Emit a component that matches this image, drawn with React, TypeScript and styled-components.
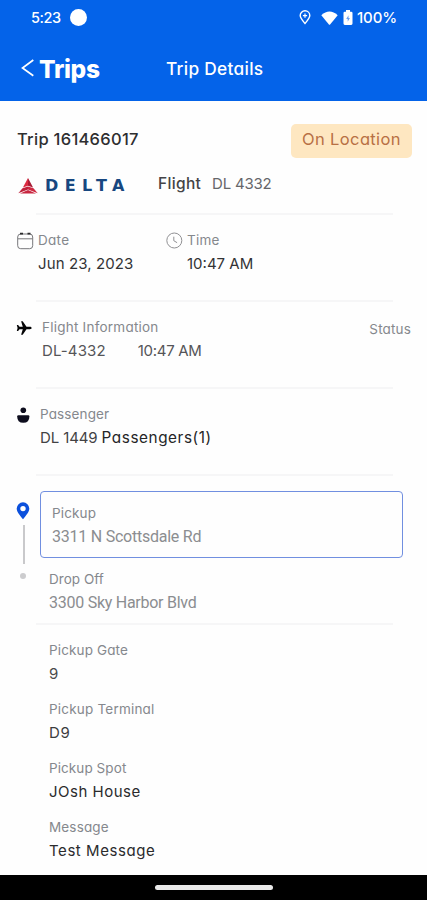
import React from 'react';
import styled, { createGlobalStyle } from 'styled-components';

const GlobalStyle = createGlobalStyle`
  * { box-sizing: border-box; }
  body { margin: 0; background: #fff; font-family: Inter, "Liberation Sans", sans-serif; font-feature-settings: "cv11"; }
`;

const Screen = styled.div`
  width: 427px;
  height: 900px;
  display: flex;
  flex-direction: column;
  background: #fefefe;
  overflow: hidden;
`;

const Header = styled.header`
  height: 101px;
  background: #0463e9;
  color: #fff;
`;

const StatusBar = styled.div`
  height: 35px;
  display: flex;
  align-items: center;
  padding: 0 30px 0 31px;
`;

const CameraDot = styled.span`
  width: 17px;
  height: 17px;
  margin-left: 9px;
  border-radius: 50%;
  background: #fff;
`;

const StatusIcons = styled.div`
  display: flex;
  align-items: center;
  margin-left: auto;
`;

const NavBar = styled.nav`
  height: 67px;
  display: grid;
  grid-template-columns: 145px 1fr;
  align-items: center;
  padding-left: 21px;
`;

const BackButton = styled.div`
  display: flex;
  align-items: center;
  gap: 4px;
`;

const Text = styled.span<{ $size?: number; $weight?: number; $color?: string; $spacing?: number }>`
  flex: none;
  font-size: ${p => p.$size ?? 15}px;
  font-weight: ${p => p.$weight ?? 400};
  color: ${p => p.$color ?? '#333335'};
  letter-spacing: ${p => p.$spacing ?? 0}px;
  line-height: 24px;
  white-space: pre;
`;

const Label = styled(Text).attrs({ $size: 13.5 })`
  color: #85888d;
`;

const Address = styled(Text).attrs({ $size: 16 })`
  font-family: Roboto, sans-serif;
  color: #8b8d90;
`;

const Content = styled.main`
  flex: 1;
  min-height: 0;
`;

const TitleRow = styled.div`
  display: flex;
  align-items: center;
  justify-content: space-between;
  height: 34px;
  margin: 23px 15px 0 17px;
`;

const TripNumber = styled(Text)`
  margin-bottom: 5px;
`;

const Badge = styled.div`
  width: 121px;
  height: 34px;
  padding: 3px 0 0 11px;
  border-radius: 5px;
  background: #fee7c1;
`;

const AirlineRow = styled.div`
  display: flex;
  align-items: center;
  height: 55px;
  padding: 0 0 3px 18px;
`;

const Airline = styled.div`
  display: flex;
  align-items: center;
  width: 140px;
  padding-top: 4px;
`;

const FlightLabel = styled(Text)`
  width: 54px;
`;

const Divider = styled.hr`
  height: 2px;
  margin: 0 34px 0 36px;
  border: 0;
  background: #f6f6f7;
`;

const Section = styled.section`
  display: flex;
  height: 85px;
  padding: 13px 16px 0 16px;
`;

const IconSlot = styled.div<{ $width: number; $top: number }>`
  flex: none;
  width: ${p => p.$width}px;
  padding-top: ${p => p.$top}px;
  svg { display: block; }
`;

const Field = styled.div<{ $width?: number }>`
  display: flex;
  flex-direction: column;
  width: ${p => (p.$width ? p.$width + 'px' : 'auto')};
`;

const ValueRow = styled.div<{ $gap?: number }>`
  display: flex;
  gap: ${p => p.$gap ?? 0}px;
`;

const StatusLabel = styled(Label)`
  margin: 2px 0 0 auto;
`;

const Route = styled.section`
  display: grid;
  grid-template-columns: 25px 1fr;
  height: 147px;
  padding: 15px 24px 0 15px;
`;

const Rail = styled.div`
  display: flex;
  flex-direction: column;
  align-items: center;
  width: 16px;
  padding-top: 11px;
  svg { display: block; }
`;

const RailLine = styled.span`
  width: 2px;
  height: 39px;
  margin: 5px 0 9px 2px;
  background: #c9c9cb;
`;

const RailDot = styled.span`
  width: 6px;
  height: 6px;
  border-radius: 50%;
  background: #ccccce;
`;

const PickupCard = styled.div`
  display: flex;
  flex-direction: column;
  width: 363px;
  height: 67px;
  padding: 9px 11px;
  border: 1px solid #718fe0;
  border-radius: 4px;
`;

const DropOff = styled.div`
  display: flex;
  flex-direction: column;
  padding: 9px 0 0 9px;
`;

const Details = styled.section`
  display: flex;
  flex-direction: column;
  gap: 11px;
  padding: 13px 0 0 49px;
`;

const SystemBar = styled.footer`
  display: flex;
  justify-content: center;
  height: 25px;
  padding-top: 10px;
  background: #000;
`;

const HomeHandle = styled.span`
  width: 118px;
  height: 5px;
  border-radius: 3px;
  background: #e9e9e9;
`;

const details: { label: string; ls: number; value: string; vs: number; color: string }[] = [
  { label: 'Pickup Gate', ls: 0.13, value: '9', vs: 0, color: '#4a4a4c' },
  { label: 'Pickup Terminal', ls: 0.2, value: 'D9', vs: 0.6, color: '#3c3c3e' },
  { label: 'Pickup Spot', ls: 0.08, value: 'JOsh House', vs: 0.5, color: '#2b2b2d' },
  { label: 'Message', ls: 0.15, value: 'Test Message', vs: 0.56, color: '#2b2b2d' },
];

const PinOutline = () => (
  <svg width="12" height="15" viewBox="0 0 12 15" fill="none" stroke="#fff" strokeWidth="1.4">
    <path d="M6 13.5C3 10 1.2 8 1.2 5.6a4.8 4.8 0 0 1 9.6 0C10.8 8 9 10 6 13.5Z" />
    <path d="M6 3.5v4.2M3.9 5.6h4.2" strokeWidth="1.2" />
  </svg>
);

const Wifi = () => (
  <svg width="17" height="14" viewBox="0 0 17 14" fill="#fff">
    <path d="M.3 4.3Q8.5-3.2 16.7 4.3L9.1 13.4q-.6.6-1.2 0Z" />
  </svg>
);

const Battery = () => (
  <svg width="10" height="15" viewBox="0 0 10 15">
    <path d="M3 0h4v1.7h1.2q1.3 0 1.3 1.3v10.6Q9.5 15 8.2 15H1.8Q.5 15 .5 13.6V3q0-1.3 1.3-1.3H3Z" fill="#fff" />
    <path d="M5.5 5.3 3.2 9h1.5v2.8L6.9 8H5.5Z" fill="#6a9ff1" />
  </svg>
);

const Chevron = () => (
  <svg width="14" height="20" viewBox="0 0 14 20" fill="none" stroke="#fff" strokeWidth="1.7">
    <path d="M12.3 1 1.5 9l10.800 7.800" />
  </svg>
);

const DeltaMark = () => (
  <svg width="20" height="16" viewBox="0 0 20 16">
    <path d="M10 0 4.9 9.6 10 7.8Z" fill="#dc2a40" />
    <path d="M10 0 15.1 9.6 10 7.8Z" fill="#a91c35" />
    <path d="M4.5 10.2.3 15.3 10 11.5V8.4Z" fill="#bd203a" />
    <path d="m15.5 10.2 4.2 5.1L10 11.5V8.4Z" fill="#cf2841" />
    <path d="M2 15.5 10 12.1l8 3.4Z" fill="#c82640" />
  </svg>
);

const DeltaWord = styled(Text)`
  margin-left: 7px;
  font-family: "DejaVu Sans", sans-serif;
`;

const CalendarIcon = () => (
  <svg width="18" height="18" viewBox="0 0 18 18" fill="none" stroke="#77777a" strokeWidth="1">
    <rect x="1.7" y="2" width="15" height="14.7" rx="3" />
    <path d="M2 6.8h14.5" />
    <path d="M4 1.7h3M11.5 1.7h3" stroke="#29292b" strokeWidth="1.7" />
  </svg>
);

const ClockIcon = () => (
  <svg width="17" height="17" viewBox="0 0 17 17" fill="none" stroke="#909093" strokeWidth="1">
    <circle cx="8.3" cy="8.5" r="7.5" />
    <path d="M7.8 4.7v4l3.3 2" />
  </svg>
);

const PlaneIcon = () => (
  <svg width="16" height="14" viewBox="0 0 16 14" fill="#050506">
    <path d="M15.6 7c0-.8-.8-1.2-1.7-1.2h-3.4L6.7.3H5.1l1.7 5.5H3.5L2.1 4H.8l.8 3-.8 3h1.3l1.4-1.8h3.3l-1.7 5.5h1.6l3.8-5.5h3.4c.9 0 1.7-.4 1.7-1.2Z" />
  </svg>
);

const PassengerIcon = () => (
  <svg width="14" height="17" viewBox="0 0 14 17" fill="#0d0d1d">
    <circle cx="7.3" cy="3.2" r="2.8" />
    <path d="M2.4 8.2h9.8q1.2 0 1.2 1.3 0 6.3-6.1 6.3T1.2 9.5q0-1.3 1.2-1.3Z" />
  </svg>
);

const PickupPin = () => (
  <svg width="14" height="18" viewBox="0 0 14 18">
    <path fillRule="evenodd" fill="#0b50dc" d="M7 17.3C3.5 13 .7 10 .7 6.6a6.3 6.3 0 0 1 12.6 0C13.3 10 10.5 13 7 17.3ZM7 3.9a2.7 2.7 0 1 0 0 5.4 2.7 2.7 0 0 0 0-5.4Z" />
  </svg>
);

const StatusIcon = styled.span<{ $after: number }>`
  display: flex;
  margin-right: ${p => p.$after}px;
`;

export default function App() {
  return (
    <>
      <GlobalStyle />
      <Screen>
        <Header>
          <StatusBar>
            <Text $size={14.5} $weight={500} $color="#fff" $spacing={-0.45}>5:23</Text>
            <CameraDot />
            <StatusIcons>
              <StatusIcon $after={10}><PinOutline /></StatusIcon>
              <StatusIcon $after={5}><Wifi /></StatusIcon>
              <StatusIcon $after={4}><Battery /></StatusIcon>
              <Text $weight={500} $color="#fff" $spacing={-0.12}>100%</Text>
            </StatusIcons>
          </StatusBar>
          <NavBar>
            <BackButton>
              <Chevron />
              <Text $size={24.5} $weight={800} $color="#fff" $spacing={-0.3}>Trips</Text>
            </BackButton>
            <Text $size={17.3} $weight={500} $color="#fff" $spacing={0.3}>Trip Details</Text>
          </NavBar>
        </Header>

        <Content>
          <TitleRow>
            <TripNumber $size={16.5} $weight={450} $color="#2e2e30" $spacing={0.28}>Trip 161466017</TripNumber>
            <Badge><Text $size={16.5} $color="#b87044" $spacing={0.37}>On Location</Text></Badge>
          </TitleRow>
          <AirlineRow>
            <Airline>
              <DeltaMark />
              <DeltaWord $size={16} $weight={700} $color="#174780" $spacing={6.4}>DELTA</DeltaWord>
            </Airline>
            <FlightLabel $size={15.5} $weight={450} $color="#444446" $spacing={0.35}>Flight</FlightLabel>
            <Text $color="#66666a" $spacing={-0.2}>DL 4332</Text>
          </AirlineRow>
          <Divider />

          <Section>
            <IconSlot $width={22} $top={4}><CalendarIcon /></IconSlot>
            <Field $width={128}>
              <Label $spacing={0.3}>Date</Label>
              <Text $spacing={0.1}>Jun 23, 2023</Text>
            </Field>
            <IconSlot $width={21} $top={4}><ClockIcon /></IconSlot>
            <Field>
              <Label $spacing={0.2}>Time</Label>
              <Text $spacing={0}>10:47 AM</Text>
            </Field>
          </Section>
          <Divider />

          <Section>
            <IconSlot $width={26} $top={6}><PlaneIcon /></IconSlot>
            <Field>
              <Label $spacing={0.23}>Flight Information</Label>
              <ValueRow $gap={32}>
                <Text $color="#555558" $spacing={0.14}>DL-4332</Text>
                <Text $color="#555558" $spacing={-0.3}>10:47 AM</Text>
              </ValueRow>
            </Field>
            <StatusLabel $spacing={0.15}>Status</StatusLabel>
          </Section>
          <Divider />

          <Section>
            <IconSlot $width={24} $top={5}><PassengerIcon /></IconSlot>
            <Field>
              <Label $spacing={0.12}>Passenger</Label>
              <ValueRow>
                <Text $color="#424244" $spacing={-0.12}>DL 1449 </Text>
                <Text $size={15.3} $color="#252527" $spacing={0.57}>Passengers(1)</Text>
              </ValueRow>
            </Field>
          </Section>
          <Divider />

          <Route>
            <Rail>
              <PickupPin />
              <RailLine />
              <RailDot />
            </Rail>
            <div>
              <PickupCard>
                <Label $spacing={0.15}>Pickup</Label>
                <Address $spacing={-0.24}>3311 N Scottsdale Rd</Address>
              </PickupCard>
              <DropOff>
                <Label $spacing={0.03}>Drop Off</Label>
                <Address $spacing={-0.26}>3300 Sky Harbor Blvd</Address>
              </DropOff>
            </div>
          </Route>
          <Divider />

          <Details>
            {details.map(d => (
              <Field key={d.label}>
                <Label $spacing={d.ls}>{d.label}</Label>
                <Text $color={d.color} $spacing={d.vs}>{d.value}</Text>
              </Field>
            ))}
          </Details>
        </Content>
        <SystemBar><HomeHandle /></SystemBar>
      </Screen>
    </>
  );
}
